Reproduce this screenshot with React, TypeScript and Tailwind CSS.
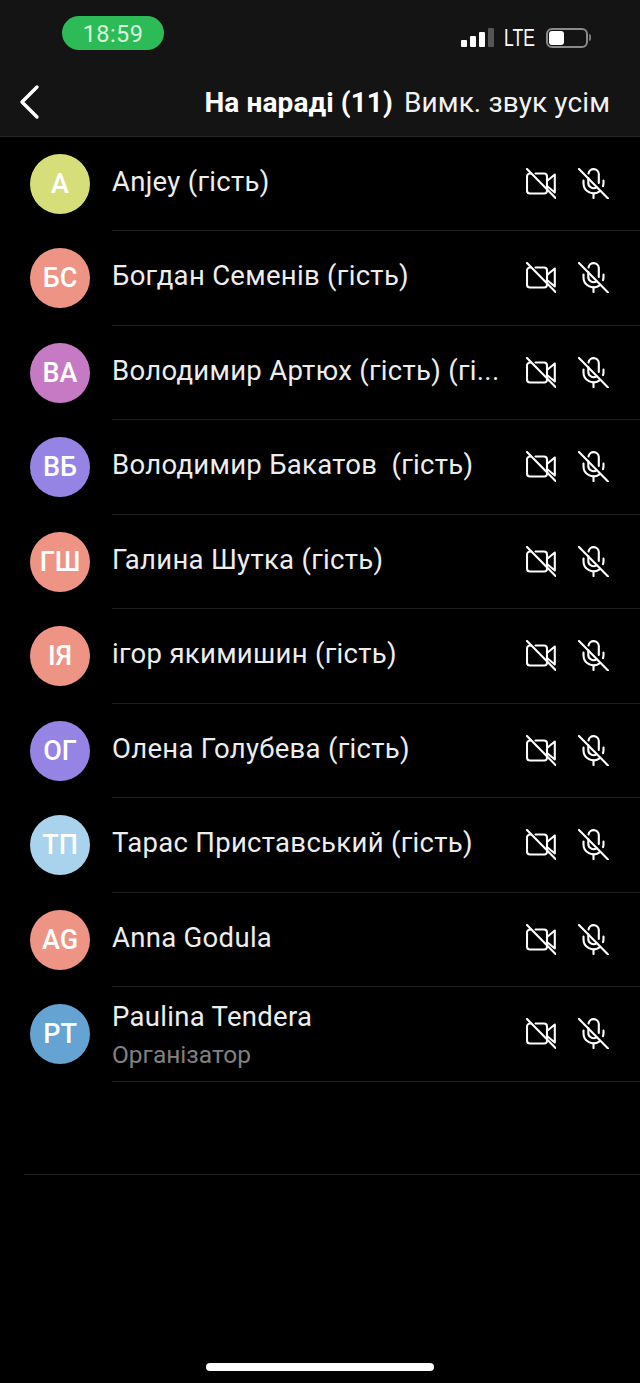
const rows = [
  { i: "A", c: "bg-[#d5de78]", n: "Anjey (гість)" },
  { i: "БС", c: "bg-[#ee9484]", n: "Богдан Семенів (гість)" },
  { i: "ВА", c: "bg-[#c77ac4]", n: "Володимир Артюх (гість) (гі..." },
  { i: "ВБ", c: "bg-[#9584e4]", n: "Володимир Бакатов  (гість)" },
  { i: "ГШ", c: "bg-[#ee9484]", n: "Галина Шутка (гість)" },
  { i: "ІЯ", c: "bg-[#ee9484]", n: "ігор якимишин (гість)" },
  { i: "ОГ", c: "bg-[#9584e4]", n: "Олена Голубева (гість)" },
  { i: "ТП", c: "bg-[#a9d2ec]", n: "Тарас Приставський (гість)" },
  { i: "AG", c: "bg-[#ee9484]", n: "Anna Godula" },
  { i: "PT", c: "bg-[#64a3d2]", n: "Paulina Tendera", s: "Організатор" },
];

function CamOff() {
  return (
    <svg width="30" height="31" viewBox="0 0 30 31" fill="none" stroke="#fff" strokeWidth="2.1" strokeLinecap="round" strokeLinejoin="round">
      <path d="M5 5.500H4A3 3 0 0 0 1 8.500V22.500A3 3 0 0 0 4 25.500H18.500A2.500 2.500 0 0 0 21 23V10.500L21 8.500A3 3 0 0 0 18 5.500H9.500" />
      <path d="M21 13L28.800 6.500V24.500L21 18" />
      <path d="M1 1L29.500 30" />
    </svg>
  );
}

function MicOff() {
  return (
    <svg width="31" height="31" viewBox="0 0 31 31" fill="none" stroke="#fff" strokeWidth="2.1" strokeLinecap="round" strokeLinejoin="round">
      <path d="M10.500 5.500A5.200 5.200 0 0 1 20.800 5.800V15" />
      <path d="M10.300 10V14.500A5.300 5.300 0 0 0 18.500 19.300" />
      <path d="M5.500 12.500V15A10 10 0 0 0 21.500 23.300M25.500 12.500V15C25.500 16.200 25.300 17.300 25 18.200" />
      <path d="M15.500 25.500V30" />
      <path d="M1 1L30 30.500" />
    </svg>
  );
}

export default function App() {
  return (
    <div className="w-[640px] h-[1383px] bg-black text-white overflow-hidden flex flex-col font-['Roboto',sans-serif]">
      <header className="h-[136.5px] shrink-0 bg-[#141414] flex flex-col border-b border-[#262626]">
        <div className="h-[68px] flex items-center justify-between pl-[62px] pr-[49px]">
          <div className="w-[102px] h-[34px] mt-[-2px] pt-[3px] rounded-full bg-[#2cbb56] flex items-center justify-center text-[23.5px] tracking-[0.4px] text-[#d6f5dd]">18:59</div>
          <div className="flex items-center mt-[7px]">
            <div className="flex items-end gap-[3px] h-[19px]">
              <span className="w-[6px] h-[7px] rounded-[1px] bg-white" />
              <span className="w-[6px] h-[11px] rounded-[1px] bg-white" />
              <span className="w-[6px] h-[15px] rounded-[1px] bg-white" />
              <span className="w-[6px] h-[19px] rounded-[1px] bg-[#555]" />
            </div>
            <span className="ml-[10px] w-[42px] text-[24px] leading-[24px] font-['Liberation_Sans',sans-serif] scale-x-[0.73] origin-left whitespace-nowrap">LTE</span>
            <div className="w-[42px] h-[20px] rounded-[6px] border-2 border-[#8a8a8a] p-[1px]">
              <div className="w-[15px] h-full rounded-[3px] bg-white" />
            </div>
            <span className="w-[2px] h-[7px] ml-[1px] rounded-r bg-[#777]" />
          </div>
        </div>
        <div className="flex-1 flex items-center justify-between pl-[19px] pr-[30px] pt-[3px]">
          <svg className="mt-[-3px]" width="22" height="36" viewBox="0 0 22 36" fill="none" stroke="#fff" strokeWidth="3.4" strokeLinecap="round" strokeLinejoin="round">
            <path d="M18 3L3 18L18 33" />
          </svg>
          <div className="flex items-center gap-[11px] text-[28px] tracking-[0.1px] whitespace-nowrap">
            <span className="font-bold">На нараді (11)</span>
            <span className="text-[#f2f2f2]">Вимк. звук усім</span>
          </div>
        </div>
      </header>

      <main className="flex flex-col">
        {rows.map((r) => (
          <div key={r.i} className="h-[94.5px] flex items-center pl-[30px]">
            <div className={`w-[60px] h-[60px] shrink-0 rounded-full flex items-center justify-center text-[27px] font-medium ${r.c}`}>{r.i}</div>
            <div className="ml-[22px] flex-1 min-w-0 h-full flex items-center border-b border-[#1f1f1f] pr-[31px]">
              <div className={`flex-1 min-w-0 ${r.s ? "mt-[3px]" : "mt-[-3px]"}`}>
                <div className="text-[27.5px] leading-[34px] whitespace-pre tracking-[0.3px] text-[#ededed]">{r.n}</div>
                {r.s && <div className="text-[24.5px] leading-[30px] mt-[6px] text-[#808080]">{r.s}</div>}
              </div>
              <div className="flex items-center gap-[22px] shrink-0">
                <CamOff />
                <MicOff />
              </div>
            </div>
          </div>
        ))}
        <div className="h-[93px] ml-[24px] border-b border-[#1f1f1f]" />
      </main>

      <div className="mt-auto pb-[12px] flex justify-center">
        <div className="w-[228px] h-[8px] rounded-full bg-white" />
      </div>
    </div>
  );
}
